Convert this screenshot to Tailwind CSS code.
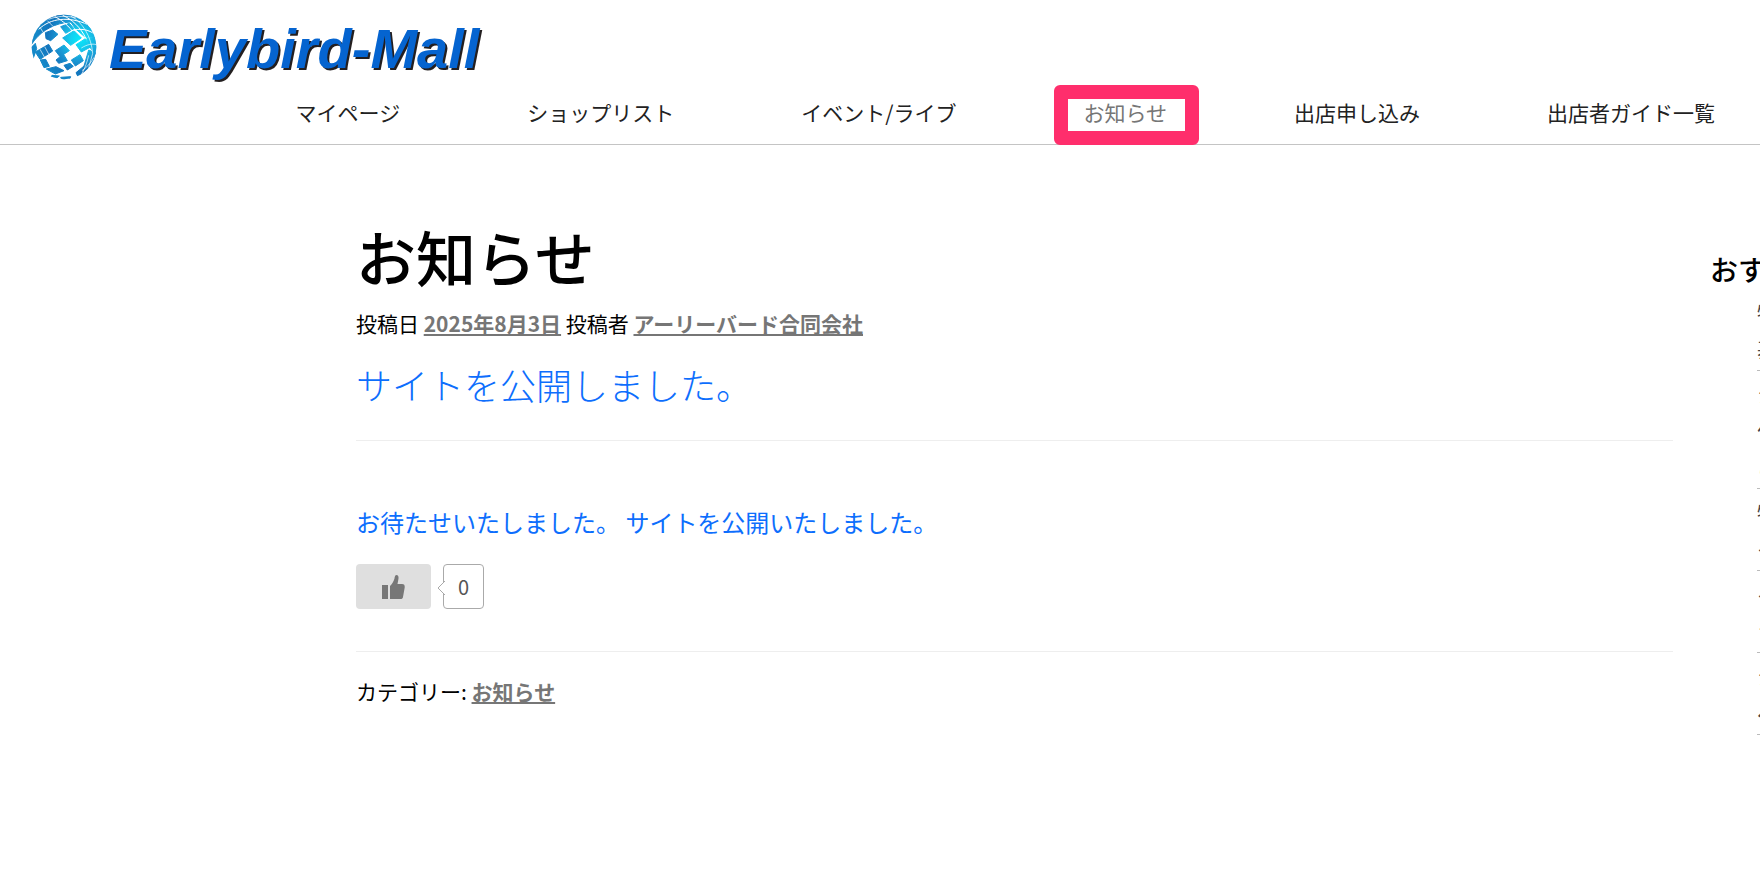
<!DOCTYPE html>
<html lang="ja">
  <head>
    <meta charset="UTF-8" />
    <meta name="viewport" content="width=device-width, initial-scale=1.0" />
    <title>お知らせ | Earlybird-Mall</title>
    <script src="https://cdn.jsdelivr.net/npm/@tailwindcss/browser@4"></script>
  </head>
  <body
    class="min-h-screen overflow-x-hidden bg-white font-['Noto_Sans_CJK_JP',sans-serif] text-[21px] leading-8 text-black"
  >
    <header class="border-b border-[#c4c4c4]">
      <a href="#" class="flex w-fit items-center gap-[11px] pt-3 pl-[30px]">
        <svg class="size-[68px]" viewBox="30 36 204 204" aria-hidden="true">
          <defs>
            <radialGradient id="globe" cx="178" cy="118" r="130" gradientUnits="userSpaceOnUse">
              <stop offset="0" stop-color="#06e8fa" />
              <stop offset="0.2" stop-color="#12d0f0" />
              <stop offset="0.5" stop-color="#1a98d4" />
              <stop offset="0.75" stop-color="#1274bc" />
              <stop offset="1" stop-color="#1488c8" />
            </radialGradient>
            <clipPath id="ball"><circle cx="132" cy="141" r="97" /></clipPath>
          </defs>
          <g clip-path="url(#ball)">
            <!-- tiles -->
            <g fill="url(#globe)" stroke="url(#globe)" stroke-width="3">
              <path d="M34 134 C42 60 110 30 170 48 L222 92 L150 66 C106 70 70 88 44 120 Z" />
              <path d="M76 98 L98 90 L114 103 L92 122 L78 116 Z" />
              <path d="M122 80 L148 70 L162 86 L137 100 Z" />
              <path d="M128 114 L162 92 L184 114 L152 136 Z" />
              <path d="M154 68 L200 66 L228 112 L196 112 L166 86 Z" />
              <path d="M168 134 L196 116 L210 142 L184 156 Z" />
              <path d="M200 116 L230 112 L230 166 L208 140 Z" />
              <path d="M106 152 L132 135 L148 152 L120 170 Z" />
              <path d="M46 156 L86 133 L98 153 L60 178 Z" />
              <path d="M34 142 L46 130 L50 146 L38 180 L32 180 Z" />
              <path d="M108 180 L130 162 L142 182 L116 190 Z" />
              <path d="M154 180 L180 164 L190 182 L166 198 Z" />
              <path d="M61 180 L77 178 L88 199 L72 203 Z" />
              <path d="M79 207 L108 200 L132 212 L106 222 Z" />
              <path d="M132 196 L150 190 L160 199 L142 210 Z" />
              <path d="M206 150 L230 160 L212 200 L174 230 L168 218 L192 198 Z" />
              <path d="M96 226 L118 228 L110 234 L92 232 Z" />
              <path d="M122 232 L152 230 L148 240 L126 240 Z" />
            </g>
            <!-- grid lines -->
            <g fill="none" stroke="#fff">
              <path stroke-width="3" d="M56 88 C92 54 146 48 204 74" />
              <path stroke-width="2" d="M86 58 C112 48 138 46 168 54" />
              <path stroke-width="3" d="M154 92 C180 84 206 88 226 104" />
              <path stroke-width="2" d="M184 144 C200 134 216 130 230 134" />
              <path stroke-width="2" d="M186 212 C200 202 214 188 222 172" />
              <path stroke-width="2" d="M60 82 L74 104" />
              <path stroke-width="2" d="M82 62 L108 88" />
              <path stroke-width="3" d="M104 50 C122 58 140 72 156 92" />
              <path stroke-width="3" d="M128 46 C156 58 182 82 198 116" />
              <path stroke-width="2" d="M152 48 C188 66 214 110 218 160 L206 204" />
              <path stroke-width="2" d="M206 166 C202 184 196 204 184 224" />
              <path stroke-width="2" d="M60 148 L74 172" />
              <path stroke-width="2" d="M74 140 L86 162" />
            </g>
          </g>
        </svg>
        <span
          class="pt-1.5 font-['Liberation_Sans',Arial,sans-serif] text-[56px] leading-[62px] font-bold text-[#0564d0] italic [text-shadow:2px_2px_0_#231f20]"
          >Earlybird-Mall</span
        >
      </a>
      <nav class="flex justify-end pt-4 pr-[45px] pb-4 text-[#222]">
        <ul class="flex gap-[127px] whitespace-nowrap">
          <li><a href="#">マイページ</a></li>
          <li><a href="#">ショップリスト</a></li>
          <li><a href="#">イベント/ライブ</a></li>
          <li class="relative">
            <a href="#" aria-current="page" class="text-[#767676]">お知らせ</a>
            <span
              class="pointer-events-none absolute -top-[11px] -right-8 -bottom-[17px] -left-[29px] rounded-md border-14 border-[#ff2e6c]"
            ></span>
          </li>
          <li><a href="#">出店申し込み</a></li>
          <li><a href="#">出店者ガイド一覧</a></li>
        </ul>
      </nav>
    </header>

    <div class="flex pt-[69px] pl-[356px]">
      <main class="min-w-0 flex-1">
        <article>
          <h1 class="text-[60px] leading-[84px] font-medium">お知らせ</h1>
          <p class="mt-[9px]">
            投稿日
            <a href="#" class="font-bold text-[#767676] underline">2025年8月3日</a>
            投稿者
            <a href="#" class="font-bold text-[#767676] underline">アーリーバード合同会社</a>
          </p>
          <h2 class="mt-[19px] text-4xl leading-[52px] font-light text-[#0d6efd]">
            サイトを公開しました。
          </h2>
          <hr class="mt-[30px] border-[#eee]" />
          <p class="mt-[63px] text-2xl leading-9 text-[#0d6efd]">
            お待たせいたしました。 サイトを公開いたしました。
          </p>
          <div class="mt-6 flex gap-3">
            <button
              type="button"
              aria-label="いいね"
              class="flex h-[45px] w-[75px] items-center justify-center rounded bg-[#dfdfdf]"
            >
              <svg class="h-6 w-[23px]" viewBox="0 0 23 24" fill="#777" aria-hidden="true">
                <path d="M0 10 H6 V24 H0 Z" />
                <path
                  d="M8 24 V11 C10 9 11.500 7 12.500 3.500 C12.700 1 13.500 0 14.500 0 C16 0 16.800 1.500 16.500 3.500 C16.300 5.500 15.800 7 15.500 9 H20 C22 9 23 10 22.700 12.500 L21 22 C20.700 23.500 20 24 18.500 24 Z"
                />
              </svg>
            </button>
            <span
              class="relative flex h-[45px] w-[41px] items-center justify-center rounded border border-[#aaa] text-xl text-[#555]"
            >
              0
              <svg class="absolute top-4 -left-[7px] h-3.5 w-2" viewBox="0 0 8 14" aria-hidden="true">
                <path d="M8 0 L1 7 L8 14" fill="#fff" stroke="#aaa" />
              </svg>
            </span>
          </div>
          <hr class="mt-[42px] border-[#eee]" />
          <p class="mt-[23px]">
            カテゴリー:
            <a href="#" class="font-bold text-[#767676] underline">お知らせ</a>
          </p>
        </article>
      </main>

      <!-- runs past the right edge of the window -->
      <aside class="-mr-[240px] ml-[37px] w-[290px] shrink-0 pt-[35px]">
        <h2 class="text-[28px] leading-10 font-medium">おすすめ</h2>
        <ul class="ml-[47px] leading-9 text-[#444]">
          <li class="border-b border-[#bbb] pt-[5px] pb-1">
            <a href="#">特定商取引法に<br />基づく表記</a>
          </li>
          <li class="border-b border-[#bbb] pt-[5px] pb-1">
            <a href="#">ショップを<br />作る方への<br />ご案内</a>
          </li>
          <li class="border-b border-[#bbb] pt-[5px] pb-1">
            <a href="#">特集ページ<br />イベント</a>
          </li>
          <li class="border-b border-[#bbb] pt-[5px] pb-1">
            <a href="#">イベント<br />ライブ</a>
          </li>
          <li class="border-b border-[#bbb] pt-[5px] pb-1">
            <a href="#">ショップ<br />ページ</a>
          </li>
        </ul>
      </aside>
    </div>
  </body>
</html>
